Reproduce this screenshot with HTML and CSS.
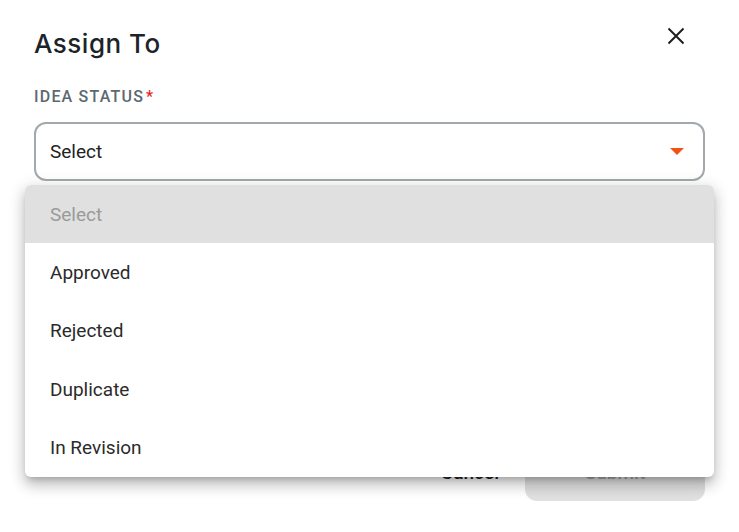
FILE: index.html
```html
<!DOCTYPE html>
<html lang="en">
<head>
<meta charset="utf-8">
<title>Assign To</title>
<link rel="stylesheet" href="styles.css">
</head>
<body>
<div class="dialog">
  <div class="header">
    <h1 class="title">Assign To</h1>
    <button class="close" aria-label="Close">
      <svg width="18" height="18" viewBox="0 0 18 18"><path d="M1.5 1.5 L16.5 16.5 M16.5 1.5 L1.5 16.5" stroke="#1f1f1f" stroke-width="2" fill="none"/></svg>
    </button>
  </div>
  <div class="label">IDEA STATUS<span class="req">*</span></div>
  <div class="select">
    <span class="select-value">Select</span>
    <span class="arrow"></span>
  </div>
  <div class="footer">
    <button class="btn-cancel">Cancel</button>
    <button class="btn-submit">Submit</button>
  </div>
</div>
<ul class="menu">
  <li class="item placeholder">Select</li>
  <li class="item">Approved</li>
  <li class="item">Rejected</li>
  <li class="item">Duplicate</li>
  <li class="item">In Revision</li>
</ul>
</body>
</html>
```
FILE: styles.css
```css
html, body {
  margin: 0;
  padding: 0;
  background: #ffffff;
  width: 739px;
  height: 532px;
  overflow: hidden;
  font-family: Roboto, "Liberation Sans", sans-serif;
}
.dialog {
  padding: 26px 34px 0 34px;
}
.header {
  display: flex;
  justify-content: space-between;
  align-items: flex-start;
}
.title {
  margin: 0;
  font-family: Inter, "Open Sans", sans-serif;
  font-weight: 500;
  font-size: 26px;
  line-height: 36px;
  letter-spacing: 0.5px;
  color: #1c2329;
}
.close {
  border: 0;
  background: none;
  padding: 0;
  margin: 1px 20px 0 0;
  width: 18px;
  height: 18px;
  display: flex;
}
.label {
  margin-top: 25px;
  font-size: 16px;
  font-weight: 500;
  line-height: 20px;
  color: #5c6970;
  letter-spacing: 1.2px;
}
.req {
  color: #ec1c24;
  margin-left: 2px;
}
.select {
  margin-top: 15px;
  height: 55px;
  border: 2px solid #a2a8ab;
  border-radius: 12px;
  display: flex;
  align-items: center;
  justify-content: space-between;
  padding: 0 19px 0 14px;
}
.select-value {
  font-size: 19px;
  color: #222222;
}
.arrow {
  width: 0;
  height: 0;
  border-left: 7px solid transparent;
  border-right: 7px solid transparent;
  border-top: 7px solid #f25314;
}
.footer {
  margin-top: 262px;
  display: flex;
  justify-content: flex-end;
  align-items: center;
  gap: 26px;
}
.btn-cancel {
  border: 0;
  background: none;
  font-family: Roboto, sans-serif;
  font-size: 19px;
  font-weight: 500;
  color: #1f1f1f;
  padding: 0;
}
.btn-submit {
  border: 0;
  width: 180px;
  height: 58px;
  border-radius: 12px;
  background: #e0e0e0;
  font-family: Roboto, sans-serif;
  font-size: 19px;
  font-weight: 500;
  color: #a0a0a0;
}
.menu {
  position: absolute;
  left: 25px;
  top: 185px;
  width: 689px;
  margin: 0;
  padding: 0;
  list-style: none;
  background: #ffffff;
  border-radius: 6px;
  overflow: hidden;
  box-shadow: 0 5px 6px -3px rgba(0,0,0,0.2), 0 9px 14px 1px rgba(0,0,0,0.14), 0 3px 16px 2px rgba(0,0,0,0.12);
}
.item {
  height: 58.4px;
  display: flex;
  align-items: center;
  padding-left: 25px;
  font-size: 19px;
  color: #2b2b2b;
}
.item.placeholder {
  background: #e0e0e0;
  color: #9a9a9a;
}
```
